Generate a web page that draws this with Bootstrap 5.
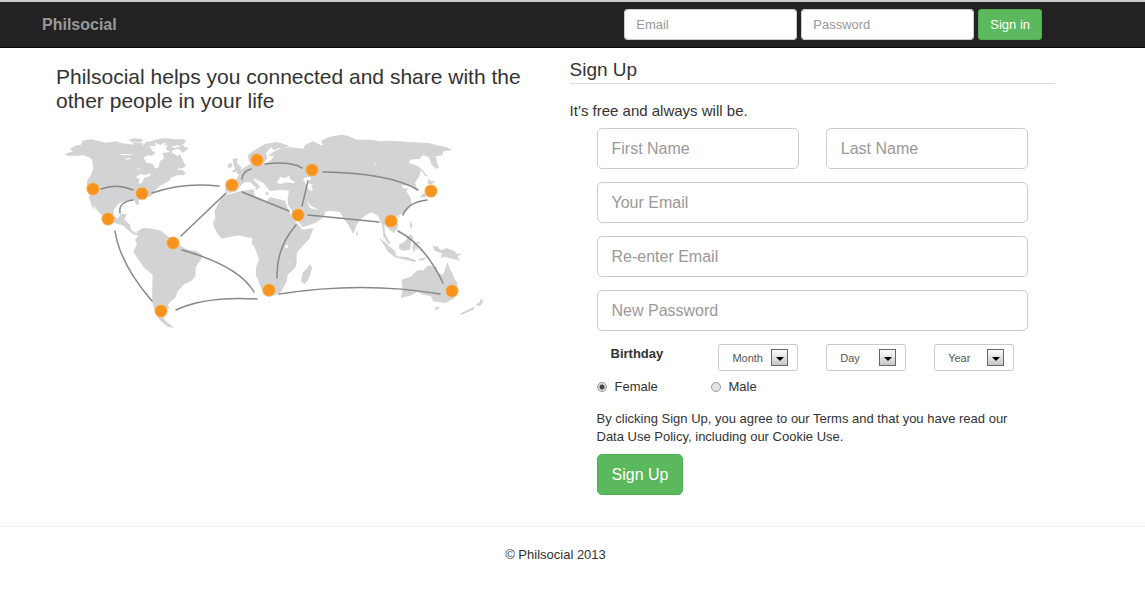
<!DOCTYPE html>
<html lang="en">
<head>
<meta charset="utf-8">
<meta name="viewport" content="width=device-width, initial-scale=1">
<title>Philsocial</title>
<link href="https://cdn.jsdelivr.net/npm/bootstrap@5.3.0/dist/css/bootstrap.min.css" rel="stylesheet">
<style>
  body { font-family: "Liberation Sans", Arial, sans-serif; font-size: 13px; line-height: 18px; color: #333; background: #fff; }
  .page-wrap { padding-left: 42px; padding-right: 76px; }
  .top-bar { background: #222; border-top: 2px solid #c8cccb; border-bottom: 1px solid #080808; padding: 7px 0; }
  .navbar-brand { color: #999; font-size: 16px; font-weight: 700; line-height: 20px; padding: 4px 0; }
  .navbar-brand:hover { color: #fff; }
  .login-form { gap: 4px; padding-right: 27px; }
  .login-form .form-control { width: 173px; height: 31px; font-size: 13px; line-height: 18px; padding: 5px 11px; border-color: #ccc; border-radius: 3px; }
  .form-control::placeholder { color: #999; }
  .btn-green { --bs-btn-color: #fff; --bs-btn-bg: #5cb85c; --bs-btn-border-color: #4cae4c; --bs-btn-hover-color: #fff; --bs-btn-hover-bg: #47a447; --bs-btn-hover-border-color: #398439; }
  .login-form .btn { height: 31px; font-size: 13px; line-height: 18px; padding: 5px 11px; border-radius: 3px; }
  .half-row { --bs-gutter-x: 28px; }
  .tagline { font-size: 21px; line-height: 24px; font-weight: 400; margin: 17px 0 12px; }
  .world { display: block; width: 100%; max-width: 434px; height: auto; }
  .form-title { font-size: 19px; line-height: 22px; font-weight: 400; margin: 11px 0 17px; padding-bottom: 2px; border-bottom: 1px solid #ddd; }
  .form-lead { font-size: 15px; line-height: 20px; margin-bottom: 7px; }
  .signup { padding: 0 27px; }
  .signup .stack { display: grid; grid-template-columns: 1fr 1fr; gap: 13px 27px; margin-bottom: 13px; }
  .signup .wide { grid-column: 1 / -1; }
  .signup .form-control { height: 41px; font-size: 16px; line-height: 20px; padding: 9px 14px; border-color: #ccc; border-radius: 5px; }
  .birth-label { font-weight: 700; line-height: 20px; }
  .date-box { display: block; appearance: none; width: 100%; height: 27px; border: 1px solid #ccc; border-radius: 2px; font-size: 11px; line-height: 14px; color: #555; padding: 0 26px 0 13px;
    background: #fff url("data:image/svg+xml,%3Csvg xmlns='http://www.w3.org/2000/svg' width='17' height='17'%3E%3ClinearGradient id='g' x2='0' y2='1'%3E%3Cstop stop-color='%23fff'/%3E%3Cstop offset='1' stop-color='%23c4c4c4'/%3E%3C/linearGradient%3E%3Crect x='.5' y='.5' width='16' height='16' fill='url(%23g)' stroke='%23666'/%3E%3Cpath d='M5 8h8l-4 4z'/%3E%3C/svg%3E") no-repeat right 9px center; }
  .gender { display: grid; grid-template-columns: 114px 1fr; margin: 7px 0 14px; }
  .gender label { display: flex; align-items: center; gap: 8px; }
  .gender input { appearance: none; width: 10px; height: 10px; margin: 0; border: 1px solid #999; border-radius: 50%; background: #e4e4e4; }
  .gender input:checked { background: radial-gradient(circle, #444 2px, #ddd 3px); }
  .terms { margin-bottom: 8px; }
  .signup .btn { font-size: 16px; line-height: 21px; padding: 9px 14px; border-radius: 5px; }
  .foot { margin-top: 31px; padding: 19px 0; border-top: 1px solid #eee; }
</style>
</head>
<body>
<header class="top-bar">
  <div class="page-wrap d-flex align-items-center justify-content-between">
    <a class="navbar-brand" href="#">Philsocial</a>
    <form class="login-form d-flex">
      <input type="email" class="form-control" placeholder="Email" aria-label="Email">
      <input type="password" class="form-control" placeholder="Password" aria-label="Password">
      <button type="submit" class="btn btn-green text-nowrap">Sign in</button>
    </form>
  </div>
</header>

<main class="page-wrap">
  <div class="row half-row mx-0">
    <section class="col-6">
      <h1 class="tagline">Philsocial helps you connected and share with the other people in your life</h1>
      <svg class="world" viewBox="56 125 434 210" role="img" aria-label="World map with connected people">
        <!-- the Americas -->
        <g fill="#d1d3d4" transform="translate(56 128) scale(.33333)">
          <path d="M25 78L50 70 42 62 62 52 75 50 80 38 105 34 125 38 150 44 180 40 200 46 235 50 262 50 280 55 290 70 310 68 320 75 345 72 365 85 372 78 382 100 390 115 375 122 388 135 385 141 362 142 345 150 338 160 310 175 295 190 285 205 265 208 248 212 248 230 240 230 236 216 205 220 190 226 174 243 172 262 185 272 195 258 212 258 205 275 222 290 226 306 240 316 250 310 246 320 233 320 215 305 200 292 175 285 150 280 138 262 125 250 115 232 105 210 102 200 92 180 93 160 105 140 112 120 108 95 100 88 80 82 60 84 35 83z"/>
          <path d="M97 203L108 235 117 247 113 225 106 206z"/>
          <path d="M216 35L235 31 258 33 262 38 250 44 228 42zM230 44L262 46 258 52 232 50zM262 52L270 42 295 38 300 55zM288 38L310 32 330 30 352 34 385 34 390 42 380 48 385 56 398 60 392 66 380 74 368 62 352 66 345 74 330 64 335 50 318 54 300 45z"/>
          <path d="M243 310L262 300 290 302 315 308 335 325 365 345 380 358 400 366 420 368 438 380 435 395 420 415 418 445 405 460 385 468 365 490 358 510 345 520 335 530 340 540 325 548 320 560 325 575 345 592 354 600 335 596 310 575 298 555 288 520 290 440 265 420 240 385 232 370 243 350 237 335 245 325z"/>
        </g>
        <!-- bays and lakes of North America -->
        <g fill="#fff" transform="translate(56 128) scale(.33333)">
          <path d="M262 90L275 82 288 83 298 76 292 68 308 66 318 72 325 90 312 100 308 118 298 122 290 108 272 104zM238 148L255 137 265 142 284 136 282 144 264 150 258 165 248 167 250 152zM194 78L226 79 225 82 194 81zM208 92L224 90 222 94 208 95zM244 122L252 119 248 127zM308 53L325 44 330 47 315 58zM345 58L362 52 375 55 358 59zM364 122L388 120 388 124 366 127z"/>
        </g>
        <!-- Europe, Africa, Asia, Oceania -->
        <g fill="#d1d3d4" transform="translate(215 128) scale(.33333)">
          <path d="M25 200L45 198 75 190 115 184 120 205 155 220 165 207 210 218 218 240 235 275 250 290 262 305 295 300 285 330 262 355 245 375 245 405 240 420 218 440 215 460 200 490 185 500 160 507 145 500 133 465 122 440 124 415 132 395 122 365 110 345 112 330 95 328 75 322 55 325 20 332 8 318-2 300-6 285 1 270-2 250 12 222z"/>
          <path d="M285 408L292 420 280 455 268 468 258 460 262 435 275 422z"/>
          <path d="M98 82L120 65 150 48 185 42 200 46 225 55 205 60 195 60 178 66 168 58 152 75 157 90 140 115 110 110 102 100z"/>
          <path d="M30 187L32 160 62 158 72 140 62 132 72 128 95 115 105 108 140 112 165 98 178 84 160 84 175 72 200 60 225 58 265 62 270 50 295 40 318 52 325 52 318 38 345 26 380 20 400 24 425 35 470 35 495 40 530 38 580 42 640 45 665 52 695 58 712 66 685 70 682 82 662 85 668 110 672 120 664 122 650 110 642 88 625 82 630 72 615 92 585 95 582 106 605 112 618 125 615 140 600 165 607 184 596 182 590 176 575 172 558 172 568 182 580 180 574 190 588 212 590 230 575 250 550 262 540 265 550 290 545 305 535 315 518 300 508 290 510 315 520 335 528 348 518 345 505 325 502 295 490 265 470 252 455 260 435 275 425 290 415 318 400 290 388 275 375 252 345 248 325 252 290 235 276 220 285 240 305 245 315 240 332 254 322 270 300 285 262 298 250 280 232 250 220 232 218 215 222 188 195 185 165 190 150 172 145 165 115 150 120 160 137 178 125 180 105 162 90 162 75 175 65 190 40 195z"/>
          <path d="M53 92L68 90 66 105 80 118 75 128 48 134 60 122 55 108zM37 112L48 103 53 114 42 122zM118 180L130 180 126 187zM150 190L156 205 162 194z"/>
          <path d="M608 113L622 125 640 147 630 143zM640 153L650 160 662 161 650 168 638 168zM645 190L635 205 614 210 622 198zM424 308L431 318 424 323zM548 258L554 268 548 270z"/>
          <path d="M493 330L510 342 540 370 545 385 580 388 605 398 598 402 540 388 520 372zM552 350L568 342 585 318 595 328 588 345 585 365 565 368 552 362zM595 345L620 340 605 350 612 368 602 360 598 375 592 360zM608 394L635 388 622 399zM585 280L592 290 590 302 584 294z"/>
          <path d="M653 355L668 355 677 367 695 360 720 370 730 390 735 398 715 394 690 386 678 390 680 376 658 368zM722 378L740 376 730 385z"/>
          <path d="M560 455L590 445 602 430 615 425 625 427 640 412 665 418 665 430 682 440 688 432 697 402 705 425 712 435 718 452 728 465 728 490 715 512 690 525 655 520 648 505 625 500 605 492 590 502 558 510 562 485zM659 538L674 536 665 548zM797 510L805 522 795 535 782 530 795 522zM781 535L774 545 740 560 734 557z"/>
        </g>
        <!-- inland seas -->
        <g fill="#fff" transform="translate(215 128) scale(.33333)">
          <path d="M186 164L196 146 208 150 224 144 224 152 240 162 236 166 215 163 195 168zM264 157L270 148 288 148 286 156 278 160 284 168 295 170 289 175 294 188 282 186 272 166zM478 108L482 106 480 116zM211 352L219 352 218 360 211 360zM222 402L228 404 226 408z"/>
        </g>
        <g fill="none" stroke="#888" stroke-width="1.5" stroke-linecap="round">
          <path d="M101 189Q117 183 133 190"/>
          <path d="M133 200Q118 202 120 213"/>
          <path d="M152 193Q183 182 219 186"/>
          <path d="M226 193L181 236"/>
          <path d="M242 179Q243 171 251 169"/>
          <path d="M265 164Q291 161 302 168"/>
          <path d="M323 172Q390 173 418 190"/>
          <path d="M242 192L289 211"/>
          <path d="M308 181L302 206"/>
          <path d="M308 215L379 222"/>
          <path d="M427 200Q408 202 403 215"/>
          <path d="M398 231Q425 245 443 283"/>
          <path d="M296 225Q276 248 277 278"/>
          <path d="M182 250Q239 266 254 292"/>
          <path d="M115 231Q120 264 152 301"/>
          <path d="M176 310Q205 296 257 299"/>
          <path d="M279 294Q363 281 440 294"/>
        </g>
        <g fill="#f7941e" stroke="#f3c98e" stroke-width=".6">
          <circle cx="93" cy="189" r="6.3"/><circle cx="142" cy="193.5" r="6.3"/>
          <circle cx="108" cy="219" r="6.3"/><circle cx="173" cy="243" r="6.3"/>
          <circle cx="161" cy="311" r="6.3"/><circle cx="232" cy="185" r="6.3"/>
          <circle cx="257" cy="160" r="6.3"/><circle cx="312" cy="170" r="6.3"/>
          <circle cx="298" cy="215" r="6.3"/><circle cx="269" cy="290" r="6.3"/>
          <circle cx="391" cy="221" r="6.3"/><circle cx="431" cy="191" r="6.3"/>
          <circle cx="452" cy="291" r="6.3"/>
        </g>
      </svg>
    </section>

    <section class="col-6">
      <h2 class="form-title">Sign Up</h2>
      <p class="form-lead">It’s free and always will be.</p>
      <form class="signup">
        <div class="stack">
          <input type="text" class="form-control" placeholder="First Name" aria-label="First Name">
          <input type="text" class="form-control" placeholder="Last Name" aria-label="Last Name">
          <input type="email" class="form-control wide" placeholder="Your Email" aria-label="Your Email">
          <input type="email" class="form-control wide" placeholder="Re-enter Email" aria-label="Re-enter Email">
          <input type="password" class="form-control wide" placeholder="New Password" aria-label="New Password">
        </div>
        <div class="row half-row mx-0">
          <div class="col-3"><label class="birth-label" for="month">Birthday</label></div>
          <div class="col-3"><select class="date-box" id="month"><option>Month</option></select></div>
          <div class="col-3"><select class="date-box" aria-label="Day"><option>Day</option></select></div>
          <div class="col-3"><select class="date-box" aria-label="Year"><option>Year</option></select></div>
        </div>
        <div class="gender">
          <label><input type="radio" name="gender" checked>Female</label>
          <label><input type="radio" name="gender">Male</label>
        </div>
        <p class="terms">By clicking Sign Up, you agree to our Terms and that you have read our Data Use Policy, including our Cookie Use.</p>
        <button type="submit" class="btn btn-green">Sign Up</button>
      </form>
    </section>
  </div>
</main>

<footer class="foot">
  <div class="page-wrap text-center">© Philsocial 2013</div>
</footer>
<script src="https://cdn.jsdelivr.net/npm/bootstrap@5.3.0/dist/js/bootstrap.bundle.min.js"></script>
</body>
</html>
